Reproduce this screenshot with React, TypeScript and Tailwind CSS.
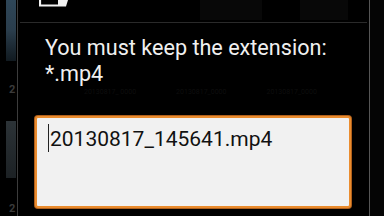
import React from "react";

export default function App() {
  return (
    <div className="w-[384px] h-[216px] bg-black flex overflow-hidden" style={{ fontFamily: "Roboto, 'Noto Sans', sans-serif" }}>
      {/* left background strip */}
      <div className="w-[17px] h-full flex flex-col items-start">
        <div className="ml-[6px] w-[10px] h-[62px] bg-gradient-to-b from-[#2e4658] via-[#2a3d4c] to-[#111a20]" />
        <div className="ml-[9px] mt-[22px] text-[11px] font-bold leading-[14px] text-[#3a3a3a]">2</div>
        <div className="ml-[6px] mt-[24px] w-[10px] h-[58px] bg-gradient-to-b from-[#2c3337] to-[#1c2124]" />
        <div className="ml-[9px] mt-[24px] text-[11px] font-bold leading-[14px] text-[#3a3a3a]">2</div>
      </div>
      <div className="w-px h-full bg-[#3c3c3c]" />
      {/* dialog */}
      <div className="w-[351px] h-full flex flex-col relative">
        <div className="h-[22px] flex items-start pl-[21px] relative">
          <svg width="30" height="8" viewBox="0 0 30 8" className="block">
            <path d="M1 0 V5.5 H19" stroke="#f2f2f2" strokeWidth="2.2" fill="none" />
            <path d="M19 0 H29 L27 6.5 H19 Z" fill="#f2f2f2" />
          </svg>
          <div className="absolute left-[182px] top-0 w-[62px] h-[20px] bg-[#080808]" />
          <div className="absolute left-[282px] top-0 w-[48px] h-[20px] bg-[#080808]" />
        </div>
        <div className="h-px bg-[#2a2a2a] mx-[2px]" />
        <div className="pl-[27px] pt-[12px] text-[21.6px] leading-[26px] text-[#f0f0f0]">
          <div>You must keep the extension:</div>
          <div>*.mp4</div>
        </div>
        <div className="flex gap-[40px] pl-[66px] h-[10px] items-center text-[7px] text-[#0e0e0e]">
          <span>20130817_ 0000</span>
          <span>20130817_0000</span>
          <span>20130817_0000</span>
        </div>
        <div className="ml-[17px] mt-[19px] w-[316px] h-[92px] rounded-[3px] border-[2px] border-[#ea8c2e] shadow-[0_0_0_1px_#b0601c] bg-[#f1f1f1] flex items-start pl-[11px] pt-[6px]">
          <div className="w-px h-[28px] bg-[#222]" />
          <div className="ml-[1px] text-[21px] leading-[30px] text-[#111]">20130817_145641.mp4</div>
        </div>
      </div>
      <div className="w-px h-full bg-[#555]" />
      <div className="flex-1 h-full bg-[#050505]" />
    </div>
  );
}
